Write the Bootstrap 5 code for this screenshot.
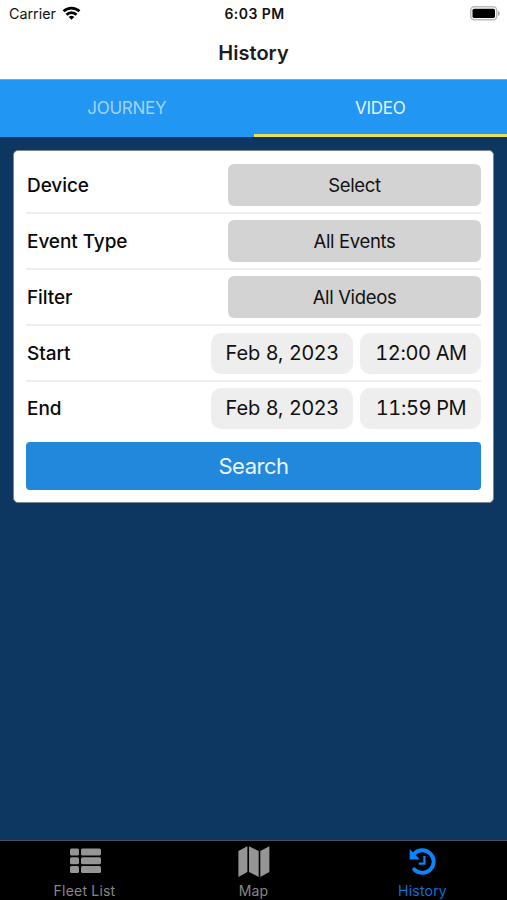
<!DOCTYPE html>
<html lang="en">
<head>
<meta charset="utf-8">
<meta name="viewport" content="width=device-width, initial-scale=1">
<title>History</title>
<link href="https://cdn.jsdelivr.net/npm/bootstrap@5.3.0/dist/css/bootstrap.min.css" rel="stylesheet">
<style>
body{font-family:Inter,"Liberation Sans",sans-serif;background:#0d3660;color:#111;height:900px;overflow:hidden}
.status-bar{height:27px;padding:0 7px 0 9px;font-size:14px;line-height:27px}
.status-side{flex:1 1 0}
.status-side .wifi{margin:-2px 0 0 6px}
.carrier{font-size:14.3px}
.clock{letter-spacing:.45px}
.page-title{height:52px;line-height:52px;font-size:20px;font-weight:600;letter-spacing:.02px;color:#1c1c1e}
.top-tabs{height:58px;background:#2196f3;border-top:1px solid #61aee9}
.top-tabs .nav-link{height:57px;padding:0;line-height:57px;font-size:17px;letter-spacing:-.3px;color:#a3d3fa;border-bottom:3px solid transparent;border-radius:0}
.top-tabs .nav-link.active{color:#e4f3fe;border-bottom-color:#e9e05a}
.search-card{margin:13px 13px 0;padding:7px 12px 12px;border:1px solid #7d8790;border-radius:5px;height:353px}
.field-row{height:56px;padding:6px 0;border-bottom:2px solid #eee}
.field-row:last-of-type{height:53px;margin-bottom:7px;border-bottom:0}
.field-name{font-size:19px;font-weight:500;letter-spacing:-.08px;color:#0a0a0a;padding:2px 0 0 1px}
.picker{width:253px;height:42px;padding:1px 0 0;background:#d3d3d3;border:0;border-radius:6px;font-size:18.5px;letter-spacing:-.35px;color:#111}
.stamps{gap:7px}
.stamp{height:41px;line-height:41px;background:#eee;border-radius:10px;font-size:20px;color:#111}
.stamp-date{width:142px}
.stamp-time{width:121px;font-variant-numeric:tabular-nums;letter-spacing:-.35px;padding-left:1px}
.search-btn{height:48px;padding:1px 0 0;background:#2188dc;border:0;border-radius:4px;font-size:22px;letter-spacing:-.5px;color:#e9f5ff}
.tab-bar{height:60px;background:#000;border-top:1px solid #4a5158}
.tab-bar a{font-size:14px;line-height:16px;color:#878787;padding-top:4px;letter-spacing:.2px}
.tab-bar a.current{color:#0a6fdc}
.tab-bar svg{width:34px;height:34px;margin-bottom:4px}
</style>
</head>
<body class="d-flex flex-column">
<header class="bg-white">
  <div class="status-bar d-flex align-items-center">
    <div class="status-side d-flex align-items-center"><span class="carrier">Carrier</span>
      <svg class="wifi" width="19" height="14" viewBox="0 0 20 15" fill="none" stroke="#000" stroke-width="2.9"><path d="M1.5 5.7a12.2 12.2 0 0 1 17 0M4.6 9.4a7.6 7.6 0 0 1 10.8 0"/><path d="M10 14.8 7 11.9a4.3 4.3 0 0 1 6 0z" fill="#000" stroke="none"/></svg>
    </div>
    <span class="clock fw-semibold">6:03 PM</span>
    <div class="status-side d-flex justify-content-end">
      <svg width="30" height="15" viewBox="0 0 30 15"><rect x=".75" y=".75" width="26" height="13" rx="3.5" fill="#fff" stroke="#bbb" stroke-width="1.5"/><rect x="2.5" y="2.7" width="22.5" height="9.2" rx="1.6"/><path d="M28 5c2.3 1 2.3 4 0 5z" fill="#aaa"/></svg>
    </div>
  </div>
  <h1 class="page-title text-center m-0">History</h1>
</header>
<nav class="top-tabs nav nav-fill">
  <a class="nav-link col-6" href="#">JOURNEY</a>
  <a class="nav-link col-6 active" href="#">VIDEO</a>
</nav>
<main class="flex-grow-1">
  <form class="search-card bg-white">
    <div class="field-row d-flex align-items-center justify-content-between"><span class="field-name">Device</span><button type="button" class="btn picker">Select</button></div>
    <div class="field-row d-flex align-items-center justify-content-between"><span class="field-name">Event Type</span><button type="button" class="btn picker">All Events</button></div>
    <div class="field-row d-flex align-items-center justify-content-between"><span class="field-name">Filter</span><button type="button" class="btn picker">All Videos</button></div>
    <div class="field-row d-flex align-items-center justify-content-between"><span class="field-name">Start</span><span class="d-flex text-center stamps"><span class="stamp stamp-date">Feb 8, 2023</span><span class="stamp stamp-time">12:00 AM</span></span></div>
    <div class="field-row d-flex align-items-center justify-content-between"><span class="field-name">End</span><span class="d-flex text-center stamps"><span class="stamp stamp-date">Feb 8, 2023</span><span class="stamp stamp-time">11:59 PM</span></span></div>
    <button type="button" class="btn search-btn w-100 d-block">Search</button>
  </form>
</main>
<nav class="tab-bar d-flex">
  <a class="col-4 d-flex flex-column align-items-center text-decoration-none" href="#">
    <svg viewBox="0 0 34 34" fill="#959595"><rect x="2" y="3.5" width="9" height="7" rx="1.5"/><rect x="13" y="3.5" width="20" height="7" rx="1.5"/><rect x="2" y="12.2" width="9" height="7" rx="1.5"/><rect x="13" y="12.2" width="20" height="7" rx="1.5"/><rect x="2" y="21" width="9" height="7" rx="1.5"/><rect x="13" y="21" width="20" height="7" rx="1.5"/></svg>
    Fleet List</a>
  <a class="col-4 d-flex flex-column align-items-center text-decoration-none" href="#">
    <svg viewBox="0 0 34 34" fill="#959595"><path d="M1.4 6 10.4 1.3V27L1.4 32zM12 1.3 21.7 6V32L12 27zM23.3 6 32.4 1.3V27L23.3 32z"/></svg>
    Map</a>
  <a class="current col-4 d-flex flex-column align-items-center text-decoration-none" href="#">
    <svg viewBox="0 0 34 34" fill="none" stroke="#0a84ff"><path d="M8.2 8.8a11.3 11.3 0 1 1 0 15.6" stroke-width="3.9" stroke-linecap="round"/><path d="M3.6 4v10.4H14z" fill="#0a84ff" stroke="none"/><path d="M18.4 11v7.6h-5.6" stroke-width="2.2"/></svg>
    History</a>
</nav>
<script src="https://cdn.jsdelivr.net/npm/bootstrap@5.3.0/dist/js/bootstrap.bundle.min.js"></script>
</body>
</html>
